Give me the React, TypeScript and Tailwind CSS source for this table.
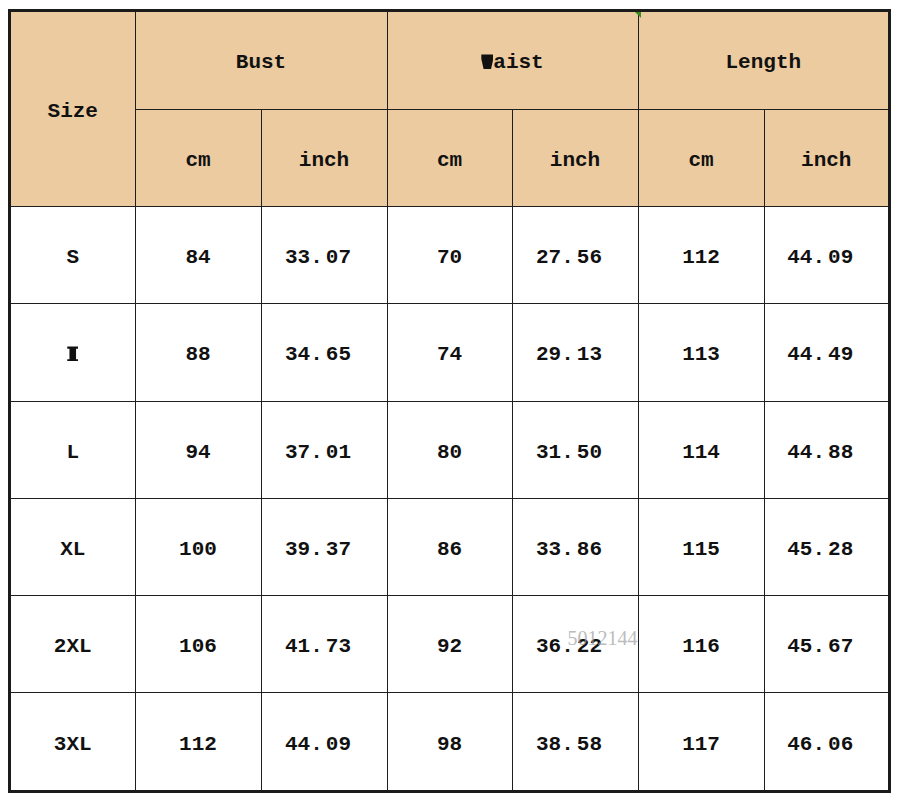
import React from "react";

const rows: [string, string, string, string, string, string, string][] = [
  ["S", "84", "33.07", "70", "27.56", "112", "44.09"],
  ["M", "88", "34.65", "74", "29.13", "113", "44.49"],
  ["L", "94", "37.01", "80", "31.50", "114", "44.88"],
  ["XL", "100", "39.37", "86", "33.86", "115", "45.28"],
  ["2XL", "106", "41.73", "92", "36.22", "116", "45.67"],
  ["3XL", "112", "44.09", "98", "38.58", "117", "46.06"],
];

const cell = "border-[1.5px] border-[#1e1e1e] text-center align-middle p-0 pt-[5px] leading-none";

export default function App() {
  return (
    <div className="w-[901px] h-[800px] bg-white pt-[9px] pl-[8px]">
      <div className="relative w-[883px] h-[784px] border-[3px] border-[#1b1b1b] overflow-hidden">
        <div className="absolute left-[624px] top-0 w-0 h-0 border-l-[6px] border-l-transparent border-t-[6px] border-t-[#3d8a1f] z-10" />
        <table
          className="w-[877px] h-[778px] table-fixed border-collapse text-[21px] font-bold text-[#111]"
          style={{ fontFamily: '"Liberation Mono", "DejaVu Sans Mono", monospace' }}
        >
          <colgroup>
            <col className="w-[124px]" />
            <col className="w-[126px]" />
            <col className="w-[126px]" />
            <col className="w-[125px]" />
            <col className="w-[126px]" />
            <col className="w-[126px]" />
            <col className="w-[124px]" />
          </colgroup>
          <tbody>
            <tr className="h-[97px] bg-[#ebcb9f]">
              <td rowSpan={2} className={cell + " border-t-0 border-l-0"}>Size</td>
              <td colSpan={2} className={cell + " border-t-0"}>Bust</td>
              <td colSpan={2} className={cell + " border-t-0"}>
                <span
                  className="inline-block w-[12px] h-[15px] bg-[#111] align-[-1px] [clip-path:polygon(0_0,100%_0,100%_30%,80%_100%,20%_100%,0_30%)]"
                  aria-label="W"
                />
                aist
              </td>
              <td colSpan={2} className={cell + " border-t-0 border-r-0"}>Length</td>
            </tr>
            <tr className="h-[97px] bg-[#ebcb9f]">
              <td className={cell}>cm</td>
              <td className={cell}>inch</td>
              <td className={cell}>cm</td>
              <td className={cell}>inch</td>
              <td className={cell}>cm</td>
              <td className={cell + " border-r-0"}>inch</td>
            </tr>
            {rows.map((r, i) => (
              <tr key={i} className="h-[97px] bg-white">
                {r.map((v, j) => (
                  <td
                    key={j}
                    className={
                      cell +
                      (j === 0 ? " border-l-0" : "") +
                      (j === 6 ? " border-r-0" : "") +
                      (i === rows.length - 1 ? " border-b-0" : "") +
                      (i === 4 && j === 4 ? " relative" : "")
                    }
                  >
                    {j === 0 && v === "M" ? (
                      <span
                        className="inline-block w-[11px] h-[15px] bg-[#111] align-[-1px] [clip-path:polygon(0_0,100%_0,100%_15%,80%_15%,80%_85%,100%_85%,100%_100%,0_100%,0_85%,20%_85%,20%_15%,0_15%)]"
                        aria-label="M"
                      />
                    ) : v.includes(".") ? (
                      <span className="inline-block whitespace-pre pr-[12px]">
                        {v.split(".")[0]}.<span className="inline-block w-[3px]" />{v.split(".")[1]}
                      </span>
                    ) : (
                      <span className="whitespace-pre">{v}</span>
                    )}
                    {i === 4 && j === 4 && (
                      <span
                        className="absolute left-[55px] top-[32px] text-[20px] font-normal text-[#a0a0a0] opacity-70 whitespace-nowrap leading-none"
                        style={{ fontFamily: '"Liberation Serif", serif' }}
                      >
                        5012144
                      </span>
                    )}
                  </td>
                ))}
              </tr>
            ))}
          </tbody>
        </table>
      </div>
    </div>
  );
}
